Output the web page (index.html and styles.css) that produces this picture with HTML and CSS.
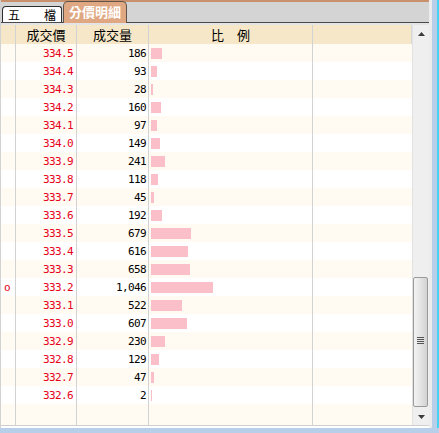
FILE: index.html
```html
<!DOCTYPE html>
<html>
<head>
<meta charset="utf-8">
<link rel="stylesheet" href="styles.css">
</head>
<body>
<div class="screen">
  <div class="window">
    <div class="topline"></div>
    <div class="tabbar">
      <div class="tab">五　　檔</div>
      <div class="tab active">分價明細</div>
    </div>
    <div class="gap"></div>
    <div class="body">
      <div class="table">
        <div class="row head">
          <div class="c mark"></div>
          <div class="c hc">成交價</div>
          <div class="c hc">成交量</div>
          <div class="c hc">比　例</div>
          <div class="c last"></div>
        </div>
        <div class="rows">
          <div class="row odd"><div class="c mark"></div><div class="c price">334.5</div><div class="c vol">186</div><div class="c ratio"><span class="bar" style="width:11px"></span></div><div class="c last"></div></div>
          <div class="row"><div class="c mark"></div><div class="c price">334.4</div><div class="c vol">93</div><div class="c ratio"><span class="bar" style="width:5.5px"></span></div><div class="c last"></div></div>
          <div class="row odd"><div class="c mark"></div><div class="c price">334.3</div><div class="c vol">28</div><div class="c ratio"><span class="bar" style="width:1.7px"></span></div><div class="c last"></div></div>
          <div class="row"><div class="c mark"></div><div class="c price">334.2</div><div class="c vol">160</div><div class="c ratio"><span class="bar" style="width:9.5px"></span></div><div class="c last"></div></div>
          <div class="row odd"><div class="c mark"></div><div class="c price">334.1</div><div class="c vol">97</div><div class="c ratio"><span class="bar" style="width:5.8px"></span></div><div class="c last"></div></div>
          <div class="row"><div class="c mark"></div><div class="c price">334.0</div><div class="c vol">149</div><div class="c ratio"><span class="bar" style="width:8.8px"></span></div><div class="c last"></div></div>
          <div class="row odd"><div class="c mark"></div><div class="c price">333.9</div><div class="c vol">241</div><div class="c ratio"><span class="bar" style="width:14.3px"></span></div><div class="c last"></div></div>
          <div class="row"><div class="c mark"></div><div class="c price">333.8</div><div class="c vol">118</div><div class="c ratio"><span class="bar" style="width:7px"></span></div><div class="c last"></div></div>
          <div class="row odd"><div class="c mark"></div><div class="c price">333.7</div><div class="c vol">45</div><div class="c ratio"><span class="bar" style="width:2.7px"></span></div><div class="c last"></div></div>
          <div class="row"><div class="c mark"></div><div class="c price">333.6</div><div class="c vol">192</div><div class="c ratio"><span class="bar" style="width:11.4px"></span></div><div class="c last"></div></div>
          <div class="row odd"><div class="c mark"></div><div class="c price">333.5</div><div class="c vol">679</div><div class="c ratio"><span class="bar" style="width:40.2px"></span></div><div class="c last"></div></div>
          <div class="row"><div class="c mark"></div><div class="c price">333.4</div><div class="c vol">616</div><div class="c ratio"><span class="bar" style="width:36.5px"></span></div><div class="c last"></div></div>
          <div class="row odd"><div class="c mark"></div><div class="c price">333.3</div><div class="c vol">658</div><div class="c ratio"><span class="bar" style="width:39px"></span></div><div class="c last"></div></div>
          <div class="row"><div class="c mark">o</div><div class="c price">333.2</div><div class="c vol">1,046</div><div class="c ratio"><span class="bar" style="width:62px"></span></div><div class="c last"></div></div>
          <div class="row odd"><div class="c mark"></div><div class="c price">333.1</div><div class="c vol">522</div><div class="c ratio"><span class="bar" style="width:30.9px"></span></div><div class="c last"></div></div>
          <div class="row"><div class="c mark"></div><div class="c price">333.0</div><div class="c vol">607</div><div class="c ratio"><span class="bar" style="width:36px"></span></div><div class="c last"></div></div>
          <div class="row odd"><div class="c mark"></div><div class="c price">332.9</div><div class="c vol">230</div><div class="c ratio"><span class="bar" style="width:13.6px"></span></div><div class="c last"></div></div>
          <div class="row"><div class="c mark"></div><div class="c price">332.8</div><div class="c vol">129</div><div class="c ratio"><span class="bar" style="width:7.6px"></span></div><div class="c last"></div></div>
          <div class="row odd"><div class="c mark"></div><div class="c price">332.7</div><div class="c vol">47</div><div class="c ratio"><span class="bar" style="width:2.8px"></span></div><div class="c last"></div></div>
          <div class="row"><div class="c mark"></div><div class="c price">332.6</div><div class="c vol">2</div><div class="c ratio"><span class="bar" style="width:0.1px"></span></div><div class="c last"></div></div>
          <div class="row odd filler"><div class="c mark"></div><div class="c price"></div><div class="c vol"></div><div class="c ratio"></div><div class="c last"></div></div>
        </div>
      </div>
      <div class="scrollbar">
        <div class="sbtn"><svg width="9" height="6" viewBox="0 0 9 6"><path d="M4.5 1 L8 5 L1 5 Z" fill="#3a3a3a"/></svg></div>
        <div class="track">
          <div class="thumb">
            <div class="grip"><i></i><i></i><i></i><i></i></div>
          </div>
        </div>
        <div class="sbtn"><svg width="9" height="6" viewBox="0 0 9 6"><path d="M1 1 L8 1 L4.5 5 Z" fill="#3a3a3a"/></svg></div>
      </div>
    </div>
    <div class="bottomline"></div>
  </div>
  <div class="edge"></div>
</div>
</body>
</html>
```
FILE: styles.css
```css
html, body {
  margin: 0;
  padding: 0;
  background: #b8cfe9;
}
.screen {
  width: 439px;
  height: 433px;
  display: flex;
  background: #b8cfe9;
  overflow: hidden;
}
.window {
  width: 428px;
  height: 428px;
  background: #ffffff;
  border-left: 1px solid #d2d2d2;
  border-right: 3px solid #ececec;
  display: flex;
  flex-direction: column;
}
.edge {
  margin-left: auto;
  width: 2px;
  height: 428px;
  background: #45d3f4;
}
.topline {
  height: 2px;
  background: #c8906b;
}
.tabbar {
  height: 20px;
  background: #d4d4d4;
  border-bottom: 1px solid #4a4a4a;
  display: flex;
  align-items: flex-end;
  padding-left: 1px;
  gap: 1px;
}
.tab {
  width: 58px;
  height: 15px;
  background: #ffffff;
  border: 1px solid #2e2e2e;
  border-bottom: none;
  border-radius: 4px 3px 0 0;
  font-family: "Noto Sans CJK TC", "Noto Sans CJK SC", sans-serif;
  font-size: 12px;
  line-height: 15px;
  color: #000;
  text-align: center;
  white-space: nowrap;
  overflow: hidden;
}
.tab.active {
  width: 62px;
  height: 21px;
  margin-bottom: -1px;
  background: #dfa882;
  border: 1px solid #5e544c;
  border-bottom: none;
  border-radius: 5px 5px 0 0;
  color: #ffffff;
  font-size: 13px;
  font-weight: bold;
  line-height: 20px;
}
.gap {
  height: 2px;
  background: #e4e4e4;
}
.body {
  flex: 1;
  display: flex;
  min-height: 0;
}
.table {
  width: 411px;
  display: flex;
  flex-direction: column;
}
.rows {
  flex: 1;
  display: flex;
  flex-direction: column;
}
.row {
  display: grid;
  grid-template-columns: 15px 61px 72px 164px 99px;
  height: 18px;
  background: #ffffff;
}
.row.odd {
  background: #fffaf2;
}
.row.head {
  height: 19px;
  background: #f6e7c8;
}
.row.filler {
  flex: 1;
  height: auto;
}
.c {
  box-sizing: border-box;
  border-right: 1px solid #d2d2d2;
  display: flex;
  align-items: center;
  overflow: hidden;
}
.c.last {
  border-right: none;
}
.head .c.last {
  border-right: 1px solid #d8d8d8;
}
.hc {
  justify-content: center;
  font-family: "Noto Sans CJK TC", "Noto Sans CJK SC", sans-serif;
  font-size: 13px;
  color: #000;
  white-space: nowrap;
}
.mark {
  color: #e6001a;
  font-family: "DejaVu Sans Mono", monospace;
  font-size: 11px;
  padding-left: 3px;
}
.price {
  justify-content: flex-end;
  padding-right: 3px;
  color: #e6001a;
  font-family: "DejaVu Sans Mono", monospace;
  font-size: 11px;
  letter-spacing: -0.6px;
}
.vol {
  justify-content: flex-end;
  padding-right: 2px;
  color: #000;
  font-family: "DejaVu Sans Mono", monospace;
  font-size: 11px;
  letter-spacing: -0.6px;
}
.ratio {
  padding-left: 2px;
}
.bar {
  display: block;
  height: 11px;
  background: #fbbfca;
}
.scrollbar {
  width: 17px;
  display: flex;
  flex-direction: column;
  background: #efefef;
  border-left: 1px solid #e2e2e2;
  box-sizing: border-box;
}
.sbtn {
  height: 17px;
  display: flex;
  align-items: center;
  justify-content: center;
  background: #efefef;
}
.track {
  flex: 1;
  display: flex;
  flex-direction: column;
  justify-content: flex-end;
  padding-bottom: 1px;
}
.thumb {
  height: 128px;
  margin: 0 1px 0 0;
  border: 1px solid #9a9a9a;
  border-radius: 2px;
  background: linear-gradient(to right, #f2f2f2 0%, #e6e6e6 45%, #d2d2d2 100%);
  display: flex;
  align-items: center;
  justify-content: center;
}
.grip {
  display: flex;
  flex-direction: column;
  gap: 1px;
  margin-top: -3px;
}
.grip i {
  display: block;
  width: 7px;
  height: 1px;
  background: #555;
}
.bottomline {
  height: 3px;
  border-top: 1px solid #cfcfcf;
  box-sizing: border-box;
  background: #ffffff;
}
```
